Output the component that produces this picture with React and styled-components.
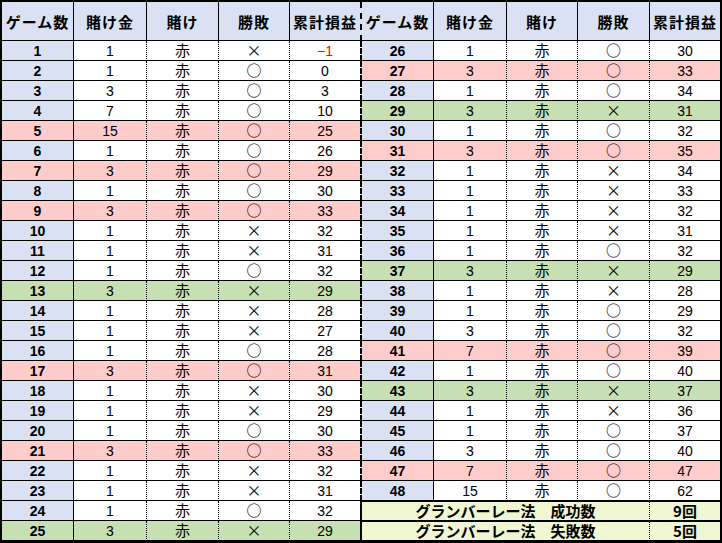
import React from 'react';
import styled, { createGlobalStyle } from 'styled-components';

const GlobalStyle = createGlobalStyle`
  html, body {
    margin: 0;
    padding: 0;
    background: #ffffff;
  }
  body {
    font-family: "Liberation Sans", "Noto Sans CJK JP", sans-serif;
  }
`;

const TONES = {
  head: '#d9e1f2',
  pink: '#ffcccc',
  green: '#c6e0b4',
  note: '#f0f6d2',
  plain: '#ffffff',
};

const EDGES = {
  solid: '1px solid #000',
  dotted: '1px dotted #000',
  divider: '2px dashed #000',
  wall: '2px solid #000',
  none: 'none',
};

const Sheet = styled.div`
  width: 722px;
  height: 543px;
  box-sizing: border-box;
  border: 2px solid #000;
  display: grid;
  grid-template-columns: 72px 73px 72px 71px 72px 72px 73px 71px 72px 70px;
  grid-template-rows: 39px repeat(25, 20px);
  overflow: hidden;
`;

const Cell = styled.div`
  box-sizing: border-box;
  display: flex;
  align-items: center;
  justify-content: center;
  background: ${p => TONES[p.$tone || 'plain']};
  border-bottom: 1px solid #000;
  border-right: ${p => EDGES[p.$edge || 'dotted']};
  font-size: 14px;
  font-weight: ${p => (p.$bold ? 700 : 400)};
  color: ${p => (p.$red ? '#ff0000' : '#000')};
  line-height: 1;
  padding-top: 1px;
`;

const HeadCell = styled(Cell)`
  font-family: "Noto Sans CJK JP", sans-serif;
  font-size: 15px;
  letter-spacing: 1px;
  padding-top: 0;
`;

const Kanji = styled.span`
  font-family: "Noto Sans CJK JP", sans-serif;
  font-size: 15px;
  font-weight: 400;
  line-height: 15px;
  margin-top: -3px;
`;

const NoteCell = styled(Cell)`
  grid-column: span ${p => p.$span || 1};
  border-top: 1px solid #000;
  font-family: "Noto Sans CJK JP", sans-serif;
  font-size: 15px;
  font-weight: 700;
  padding-top: 0;
  padding-bottom: 2px;
`;

const HEADERS = ['ゲーム数', '賭け金', '賭け', '勝敗', '累計損益'];

// [bet, win, total, tone]
const LEFT = [
  [1, 0, -1], [1, 1, 0], [3, 1, 3], [7, 1, 10], [15, 1, 25, 'pink'],
  [1, 1, 26], [3, 1, 29, 'pink'], [1, 1, 30], [3, 1, 33, 'pink'], [1, 0, 32],
  [1, 0, 31], [1, 1, 32], [3, 0, 29, 'green'], [1, 0, 28], [1, 0, 27],
  [1, 1, 28], [3, 1, 31, 'pink'], [1, 0, 30], [1, 0, 29], [1, 1, 30],
  [3, 1, 33, 'pink'], [1, 0, 32], [1, 0, 31], [1, 1, 32], [3, 0, 29, 'green'],
];

const RIGHT = [
  [1, 1, 30], [3, 1, 33, 'pink'], [1, 1, 34], [3, 0, 31, 'green'], [1, 1, 32],
  [3, 1, 35, 'pink'], [1, 0, 34], [1, 0, 33], [1, 0, 32], [1, 0, 31],
  [1, 1, 32], [3, 0, 29, 'green'], [1, 0, 28], [1, 1, 29], [3, 1, 32],
  [7, 1, 39, 'pink'], [1, 1, 40], [3, 0, 37, 'green'], [1, 0, 36], [1, 1, 37],
  [3, 1, 40], [7, 1, 47, 'pink'], [15, 1, 62],
];

const NOTES = [
  ['グランバーレー法\u3000成功数', '9回'],
  ['グランバーレー法\u3000失敗数', '5回'],
];

function GameRow({ no, row, lastEdge }) {
  const [bet, win, total, tone] = row;
  return (
    <>
      <Cell $tone={tone || 'head'} $edge="solid" $bold>{no}</Cell>
      <Cell $tone={tone}>{bet}</Cell>
      <Cell $tone={tone}><Kanji>赤</Kanji></Cell>
      <Cell $tone={tone}><Kanji>{win ? '○' : '×'}</Kanji></Cell>
      <Cell $tone={tone} $edge={lastEdge} $red={total < 0}>
        {total < 0 ? `−${Math.abs(total)}` : total}
      </Cell>
    </>
  );
}

export default function App() {
  return (
    <>
      <GlobalStyle />
      <Sheet>
        {[0, 1].map(side =>
          HEADERS.map((h, i) => (
            <HeadCell
              key={`h${side}${i}`}
              $tone="head"
              $bold
              $edge={i < 4 ? 'solid' : side === 0 ? 'divider' : 'none'}
            >
              {h}
            </HeadCell>
          ))
        )}
        {LEFT.map((row, i) => (
          <React.Fragment key={i}>
            <GameRow no={i + 1} row={row} lastEdge={i >= 23 ? 'wall' : 'divider'} />
            {RIGHT[i] ? (
              <GameRow no={i + 26} row={RIGHT[i]} lastEdge="none" />
            ) : (
              <>
                <NoteCell $tone="note" $span={4}>{NOTES[i - 23][0]}</NoteCell>
                <NoteCell $tone="note" $edge="none">{NOTES[i - 23][1]}</NoteCell>
              </>
            )}
          </React.Fragment>
        ))}
      </Sheet>
    </>
  );
}
